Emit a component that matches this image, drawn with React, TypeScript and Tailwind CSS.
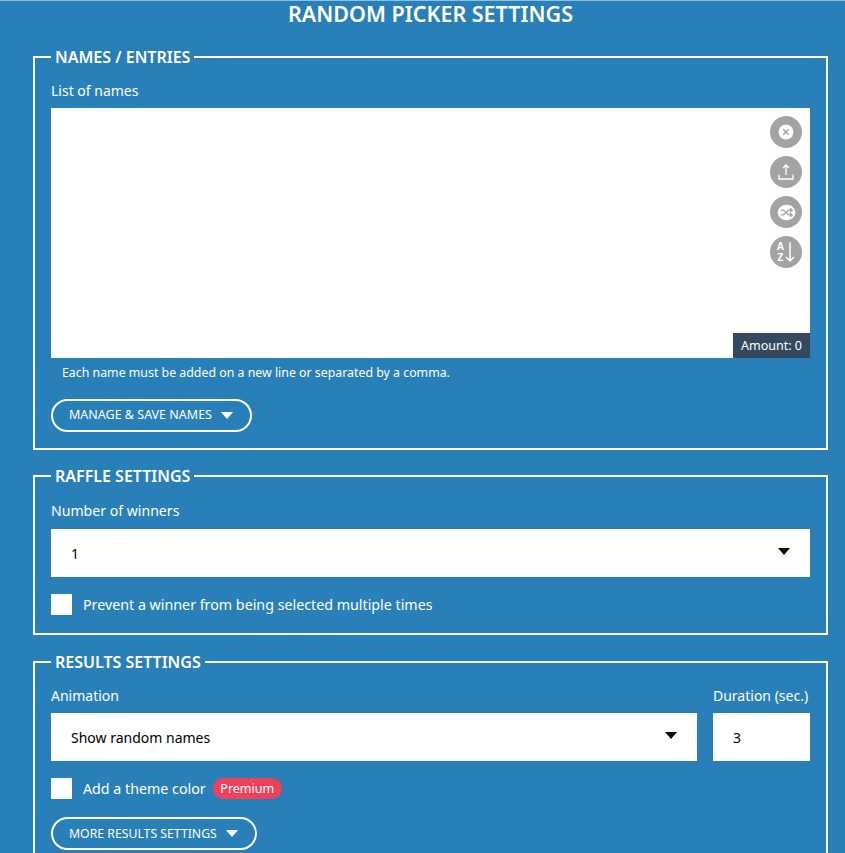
import React from "react";

const Caret = ({ className }: { className: string }) => (
  <svg viewBox="0 0 14 8" className={className}>
    <path d="M0 0h14L7 8z" fill="currentColor" />
  </svg>
);

const IconBtn = ({ children }: { children: React.ReactNode }) => (
  <div className="w-8 h-8 rounded-full bg-[#a3a3a3] flex items-center justify-center">{children}</div>
);

const Section = ({ title, className, children }: { title: string; className: string; children: React.ReactNode }) => (
  <fieldset className={`border-2 border-white mx-[33px] px-4 ${className}`}>
    <legend className="px-[4px] ml-0 text-[16px] leading-6 font-semibold text-white">{title}</legend>
    {children}
  </fieldset>
);

const Pill = ({ label, className, textClass }: { label: string; className: string; textClass: string }) => (
  <div className={`h-[33px] border-2 border-white rounded-full flex items-center pl-4 text-white ${className}`}>
    <span className={textClass}>{label}</span>
    <Caret className="w-[14px] h-[7px] ml-2 text-white" />
  </div>
);

export default function App() {
  return (
    <div className="w-[845px] h-[853px] overflow-hidden bg-[#2980b9] border-t border-[#8fbfdc] text-white font-['Noto_Sans',sans-serif]">
      <h1 className="text-center text-[21.5px] leading-7 font-semibold mb-[17px] -mt-px pl-[16px]">RANDOM PICKER SETTINGS</h1>

      <Section title="NAMES / ENTRIES" className="h-[405px]">
        <div className="text-[14px] leading-5 mt-[12px] mb-[7px]">List of names</div>
        <div className="relative h-[250px] bg-white w-[759px]">
          <div className="absolute right-2 top-2 flex flex-col gap-2">
            <IconBtn>
              <svg viewBox="0 0 16 16" className="w-4 h-4">
                <circle cx="8" cy="8" r="7.5" fill="#fff" />
                <path d="M5.3 5.3l5.4 5.4M10.7 5.3l-5.4 5.4" stroke="#a3a3a3" strokeWidth="1.6" />
              </svg>
            </IconBtn>
            <IconBtn>
              <svg viewBox="0 0 18 18" className="w-[18px] h-[18px]" fill="none" stroke="#fff" strokeWidth="1.3">
                <path d="M9 12V2M6 5l3-3 3 3M2 11.5V16h14v-4.5" />
              </svg>
            </IconBtn>
            <IconBtn>
              <svg viewBox="0 0 16 16" className="w-[19px] h-[19px]">
                <ellipse cx="8" cy="8" rx="7.5" ry="6.5" fill="#fff" />
                <path d="M3 6h2.500l4 4H12M3 10h2.500l4-4H12M11 4.500L12.800 6 11 7.500M11 8.500l1.800 1.500L11 11.500" fill="none" stroke="#a3a3a3" strokeWidth="1.100" />
              </svg>
            </IconBtn>
            <IconBtn>
              <div className="flex items-center gap-[1px]">
                <div className="flex flex-col text-[10px] leading-[11px] font-bold text-white items-center">
                  <span>A</span>
                  <span>Z</span>
                </div>
                <svg viewBox="0 0 10 22" className="w-[10px] h-[22px]" fill="none" stroke="#fff" strokeWidth="1.500">
                  <path d="M5 1v19M1 16l4 4 4-4" />
                </svg>
              </div>
            </IconBtn>
          </div>
          <div className="absolute right-0 bottom-0 w-[77px] h-[25px] bg-[#34495e] text-[12.5px] leading-[25px] text-center">Amount: 0</div>
        </div>
        <div className="text-[12.35px] leading-4 mt-[7px] ml-[11px]">Each name must be added on a new line or separated by a comma.</div>
        <Pill label="MANAGE & SAVE NAMES" className="w-[201px] mt-[18px]" textClass="text-[12.5px]" />
      </Section>

      <Section title="RAFFLE SETTINGS" className="h-[171px] mt-[14px]">
        <div className="text-[14.1px] leading-5 mt-[13px] mb-[8px]">Number of winners</div>
        <div className="h-[48px] w-[759px] bg-white text-black text-[14px] flex items-center justify-between pl-5 pr-5">
          <span>1</span>
          <Caret className="w-[12px] h-[7px] text-black -translate-y-[2px]" />
        </div>
        <div className="flex items-center mt-[17px] text-[14.25px]">
          <div className="w-[21px] h-[21px] bg-white mr-[11px]" />
          <span>Prevent a winner from being selected multiple times</span>
        </div>
      </Section>

      <Section title="RESULTS SETTINGS" className="h-[220px] mt-[15px]">
        <div className="flex gap-4 mt-[12px]">
          <div className="w-[646px]">
            <div className="text-[14px] leading-5 mb-[7px]">Animation</div>
            <div className="h-[48px] bg-white text-black text-[14px] flex items-center justify-between pl-5 pr-5">
              <span>Show random names</span>
              <Caret className="w-[12px] h-[7px] text-black -translate-y-[2px]" />
            </div>
          </div>
          <div className="w-[97px]">
            <div className="text-[14px] leading-5 mb-[7px] whitespace-nowrap">Duration (sec.)</div>
            <div className="h-[48px] bg-white text-black text-[14px] flex items-center pl-5">3</div>
          </div>
        </div>
        <div className="flex items-center mt-[17px] text-[14.25px]">
          <div className="w-[21px] h-[21px] bg-white mr-[11px]" />
          <span>Add a theme color</span>
          <span className="ml-[7px] h-[21px] w-[69px] text-center rounded-full bg-[#f0415a] text-[12.5px] leading-[21px]">Premium</span>
        </div>
        <Pill label="MORE RESULTS SETTINGS" className="w-[206px] mt-[18px]" textClass="text-[12.25px]" />
      </Section>
    </div>
  );
}
